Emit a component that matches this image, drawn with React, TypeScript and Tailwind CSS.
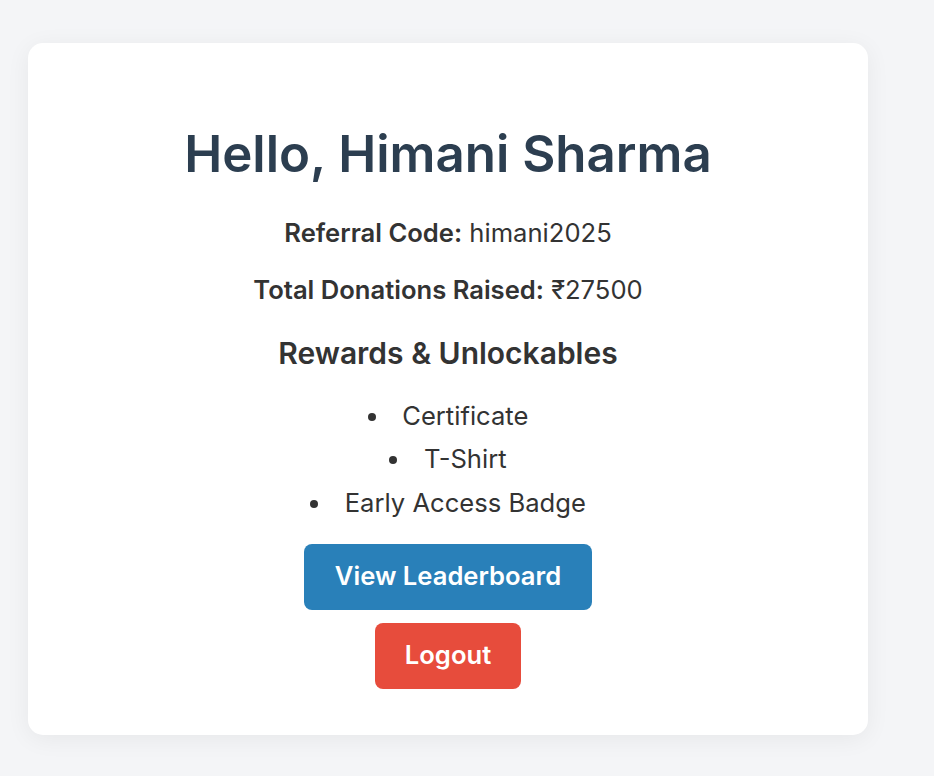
export default function App() {
	const rewards = ["Certificate", "T-Shirt", "Early Access Badge"]
	return (
		<div className="min-h-screen bg-[#f4f5f7] pt-[43px] pl-[28px] font-['Inter',sans-serif]">
			<div className="flex w-[840px] flex-col items-center rounded-[15px] bg-white px-10 pt-[80px] pb-[46px] text-center text-[#333] shadow-[0_4px_24px_rgba(0,0,0,0.06)]">
				<h1 className="text-[51px] leading-[62px] font-semibold text-[#2c3e50]">Hello, Himani Sharma</h1>
				<p className="mt-[32px] text-[25.6px] leading-[31px]">
					<span className="font-semibold">Referral Code:</span> himani2025
				</p>
				<p className="mt-[26px] text-[25.6px] leading-[31px]">
					<span className="font-semibold">Total Donations Raised:</span> ₹27500
				</p>
				<h3 className="mt-[29.5px] text-[30px] leading-[36px] font-semibold">Rewards &amp; Unlockables</h3>
				<ul className="mt-[23px] list-inside list-disc text-[25.6px] leading-[43.5px]">
					{rewards.map((r) => (
						<li key={r}>{r}</li>
					))}
				</ul>
				<button className="mt-[19.5px] flex h-[66px] items-center rounded-[8px] bg-[#2980b9] px-[30.5px] text-[25.6px] font-semibold text-white">
					View Leaderboard
				</button>
				<button className="mt-[13px] flex h-[66px] items-center rounded-[8px] bg-[#e74c3c] px-[30px] text-[25.6px] font-semibold text-white">
					Logout
				</button>
			</div>
		</div>
	)
}
